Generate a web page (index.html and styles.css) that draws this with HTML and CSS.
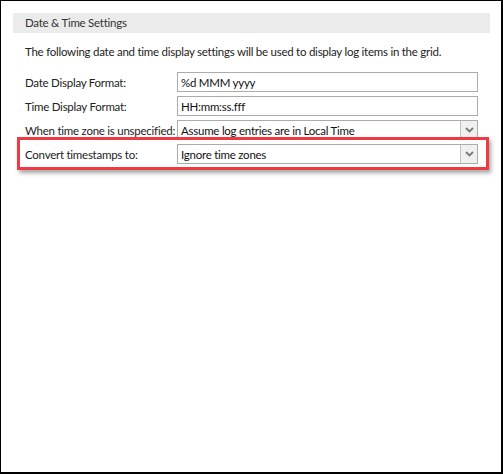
FILE: index.html
```html
<!DOCTYPE html>
<html>
<head>
<meta charset="utf-8">
<link rel="stylesheet" href="styles.css">
</head>
<body>
<div class="frame">
  <div class="section-title">Date &amp; Time Settings</div>
  <div class="content">
    <p class="intro">The following date and time display settings will be used to display log items in the grid.</p>
    <div class="form">
      <div class="row">
        <label class="label">Date Display Format:</label>
        <div class="field"><span class="value">%d MMM yyyy</span></div>
      </div>
      <div class="row">
        <label class="label">Time Display Format:</label>
        <div class="field"><span class="value">HH:mm:ss.fff</span></div>
      </div>
      <div class="row">
        <label class="label">When time zone is unspecified:</label>
        <div class="field combo">
          <span class="value">Assume log entries are in Local Time</span>
          <span class="drop"><svg width="9" height="6" viewBox="0 0 9 6"><path d="M1 1 L4.5 4.5 L8 1" fill="none" stroke="#7a7a7a" stroke-width="1.8"/></svg></span>
        </div>
      </div>
      <div class="row marked">
        <label class="label">Convert timestamps to:</label>
        <div class="field combo">
          <span class="value">Ignore time zones</span>
          <span class="drop"><svg width="9" height="6" viewBox="0 0 9 6"><path d="M1 1 L4.5 4.5 L8 1" fill="none" stroke="#7a7a7a" stroke-width="1.8"/></svg></span>
        </div>
        <div class="highlight"></div>
      </div>
    </div>
  </div>
</div>
</body>
</html>
```

FILE: styles.css
```css
html, body {
  margin: 0;
  padding: 0;
  background: #fff;
}

.frame {
  box-sizing: border-box;
  width: 503px;
  height: 474px;
  border-top: 1px solid #000;
  border-left: 1px solid #000;
  border-right: 2px solid #000;
  border-bottom: 2px solid #000;
  padding: 12px 12px 0 12px;
  font-family: Lato, "Noto Sans", sans-serif;
  font-size: 11.5px;
  letter-spacing: -0.25px;
  color: #222;
}

.section-title {
  height: 20px;
  line-height: 20px;
  background: #ebebeb;
  padding-left: 12px;
  color: #333;
  width: 465px;
}

.content {
  padding-left: 12px;
}

.intro {
  margin: 11px 0 0 0;
  line-height: 16px;
  height: 16px;
  white-space: nowrap;
}

.form {
  margin-top: 12px;
  display: flex;
  flex-direction: column;
  gap: 4px;
  width: 453px;
}

.row {
  display: flex;
  align-items: center;
  height: 20px;
}

.row.marked {
  position: relative;
}

.label {
  width: 152px;
  flex: none;
  white-space: nowrap;
}

.field {
  box-sizing: border-box;
  flex: 1;
  height: 20px;
  border: 1px solid #ababab;
  display: flex;
  align-items: center;
  padding-left: 3px;
  color: #111;
  background: #fff;
}

.value {
  flex: 1;
  white-space: nowrap;
}

.drop {
  box-sizing: border-box;
  width: 17px;
  height: 18px;
  border-left: 1px solid #c2c2c2;
  background: #f0f0f0;
  display: flex;
  align-items: center;
  justify-content: center;
}

.highlight {
  position: absolute;
  top: -7px;
  left: -8px;
  right: -11px;
  bottom: -6px;
  border: 3px solid #ee3b43;
  box-shadow: 2px 3px 4px rgba(0, 0, 0, 0.35);
  pointer-events: none;
}
```
